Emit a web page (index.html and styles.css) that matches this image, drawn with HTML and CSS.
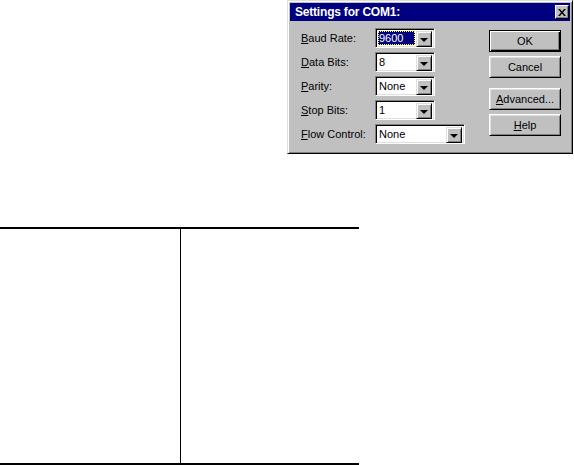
FILE: index.html
```html
<!DOCTYPE html>
<html lang="en">
<head>
  <meta charset="UTF-8">
  <title>Settings for COM1</title>
  <link rel="stylesheet" href="styles.css">
</head>
<body>

  <div class="page">
    <div class="dialog">
      <div class="titlebar">
        <span class="title">Settings for COM1:</span>
        <span class="close">
          <svg width="8" height="7" viewBox="0 0 8 7">
            <path d="M0 0h2l2 2.5L6 0h2L5 3.5 8 7H6L4 4.5 2 7H0l3-3.5z" fill="#000"/>
          </svg>
        </span>
      </div>

      <div class="dialog-body">
        <div class="fields">
          <div class="row">
            <span class="label"><u>B</u>aud Rate:</span>
            <div class="combo">
              <span class="value selected">9600</span>
              <span class="arrow"></span>
            </div>
          </div>
          <div class="row">
            <span class="label"><u>D</u>ata Bits:</span>
            <div class="combo">
              <span class="value">8</span>
              <span class="arrow"></span>
            </div>
          </div>
          <div class="row">
            <span class="label"><u>P</u>arity:</span>
            <div class="combo">
              <span class="value">None</span>
              <span class="arrow"></span>
            </div>
          </div>
          <div class="row">
            <span class="label"><u>S</u>top Bits:</span>
            <div class="combo">
              <span class="value">1</span>
              <span class="arrow"></span>
            </div>
          </div>
          <div class="row">
            <span class="label"><u>F</u>low Control:</span>
            <div class="combo wide">
              <span class="value">None</span>
              <span class="arrow"></span>
            </div>
          </div>
        </div>

        <div class="actions">
          <button class="btn default">OK</button>
          <button class="btn">Cancel</button>
          <button class="btn spaced"><u>A</u>dvanced...</button>
          <button class="btn"><u>H</u>elp</button>
        </div>
      </div>
    </div>

    <div class="frame">
      <div class="cell first"></div>
      <div class="cell"></div>
    </div>
  </div>

</body>
</html>
```

FILE: styles.css
```css
:root {
  --face: #c0c0c0;
  --shadow: #808080;
  --light: #dfdfdf;
  --navy: #000080;
}

* {
  box-sizing: border-box;
}

body {
  margin: 0;
  background: #fff;
  font-family: 'Liberation Sans', Arial, sans-serif;
  font-size: 11px;
  color: #000;
}

.page {
  display: flex;
  flex-direction: column;
  width: 574px;
}

/* dialog window */
.dialog {
  width: 286px;
  height: 154px;
  margin-left: auto;
  margin-right: 1px;
  padding: 2px;
  background: var(--face);
  border: 1px solid;
  border-color: var(--light) #000 #000 var(--light);
  box-shadow: inset 1px 1px #fff, inset -1px -1px var(--shadow);
}

.titlebar {
  height: 18px;
  display: flex;
  align-items: center;
  padding: 0 1px 0 5px;
  background: var(--navy);
}

.title {
  flex: 1;
  color: #fff;
  font-weight: bold;
  font-size: 12px;
  letter-spacing: -0.2px;
}

.close {
  width: 14px;
  height: 14px;
  display: flex;
  align-items: center;
  justify-content: center;
  background: var(--face);
  border: 1px solid;
  border-color: #fff #000 #000 #fff;
  box-shadow: inset -1px -1px var(--shadow);
}

.dialog-body {
  display: flex;
  padding: 7px 9px 0 11px;
}

.fields {
  display: flex;
  flex-direction: column;
  gap: 4px;
}

.row {
  display: flex;
  align-items: center;
  height: 20px;
}

.label {
  width: 74px;
}

/* combo box */
.combo {
  width: 60px;
  height: 20px;
  display: flex;
  padding: 2px;
  background: #fff;
  border: 1px solid;
  border-color: var(--shadow) #fff #fff var(--shadow);
  box-shadow: inset 1px 1px #000, inset -1px -1px var(--light);
}

.combo.wide {
  width: 90px;
}

.value {
  flex: 1;
  display: flex;
  align-items: center;
  padding-left: 1px;
}

.value.selected {
  background: var(--navy);
  color: #fff;
  outline: 1px dotted #ff0;
  outline-offset: -1px;
  margin-right: 1px;
}

.arrow {
  width: 16px;
  height: 16px;
  display: flex;
  align-items: center;
  justify-content: center;
  background: var(--face);
  border: 1px solid;
  border-color: var(--light) #000 #000 var(--light);
  box-shadow: inset 1px 1px #fff, inset -1px -1px var(--shadow);
}

.arrow::after {
  content: "";
  border-left: 4px solid transparent;
  border-right: 4px solid transparent;
  border-top: 4px solid #000;
  margin-top: 1px;
}

/* push buttons */
.actions {
  margin-left: auto;
  padding-top: 2px;
  display: flex;
  flex-direction: column;
  gap: 4px;
}

.btn {
  width: 72px;
  height: 22px;
  padding: 0;
  font-family: inherit;
  font-size: 11px;
  color: #000;
  background: var(--face);
  border: 1px solid;
  border-color: #fff #000 #000 #fff;
  box-shadow: inset 1px 1px var(--light), inset -1px -1px var(--shadow);
}

.btn.default {
  border-color: #000;
  box-shadow: inset 1px 1px #fff, inset -1px -1px #000, inset -2px -2px var(--shadow);
}

.btn.spaced {
  margin-top: 6px;
}

/* empty two-column frame */
.frame {
  width: 359px;
  height: 238px;
  margin-top: 73px;
  display: grid;
  grid-template-columns: 181px 1fr;
  border-top: 2px solid #000;
  border-bottom: 2px solid #000;
}

.cell.first {
  border-right: 1px solid #000;
}
```
